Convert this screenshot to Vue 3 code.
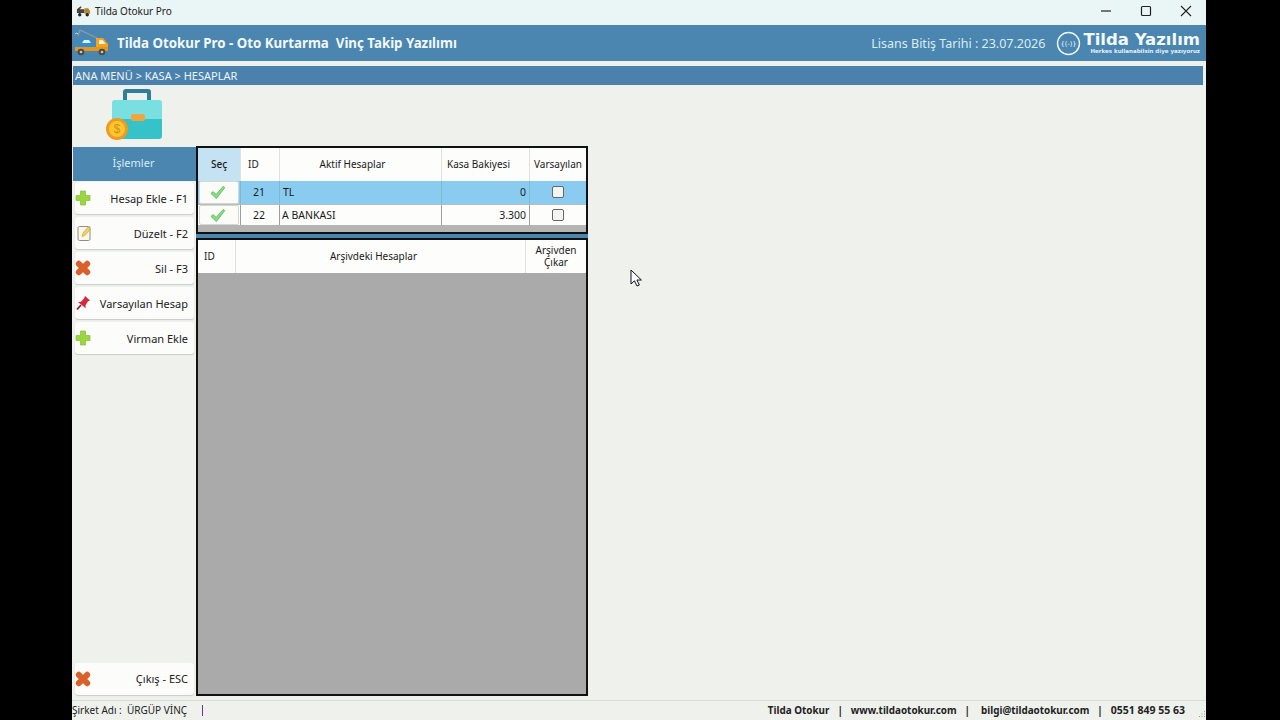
<template>
  <div class="window">
    <!-- Title bar -->
    <div class="titlebar">
      <svg class="app-icon" viewBox="0 0 16 12" width="15" height="12">
        <path d="M1 8V4l4-3 1 1-2 2h5v4z" fill="#4a4038" />
        <path d="M9 3h4l2 3v3H9z" fill="#b5842c" />
        <circle cx="4" cy="10" r="1.8" fill="#222" />
        <circle cx="12" cy="10" r="1.8" fill="#222" />
      </svg>
      <span class="app-name">Tilda Otokur Pro</span>
      <div class="win-controls">
        <svg viewBox="0 0 40 24" width="40" height="24"><path d="M15 11h10" stroke="#222" stroke-width="1.2" /></svg>
        <svg viewBox="0 0 40 24" width="40" height="24"><rect x="15.5" y="6.5" width="9" height="9" rx="1" fill="none" stroke="#222" stroke-width="1.2" /></svg>
        <svg viewBox="0 0 40 24" width="40" height="24"><path d="M15 6l10 10M25 6L15 16" stroke="#222" stroke-width="1.1" /></svg>
      </div>
    </div>

    <!-- Header -->
    <div class="header">
      <svg class="truck" viewBox="0 0 40 34" width="40" height="34">
        <path d="M25 12L8 4l-2 6" fill="none" stroke="#8d9aa3" stroke-width="1.3" />
        <path d="M3 8c1-1 2-1 3 0" fill="none" stroke="#dfe8ec" stroke-width="1" />
        <path d="M5 21v-3l3-1 3-4h7l3 4 2 1v3z" fill="#2f8fd0" />
        <path d="M10 17l2-3h5l2 3z" fill="#dff1fb" />
        <path d="M24 12h7l5 6v7H24z" fill="#f2a31f" />
        <path d="M27 14h3.500l3 4H27z" fill="#fff4d8" />
        <rect x="3" y="21" width="33" height="4" fill="#e8951a" />
        <circle cx="9" cy="26" r="3.300" fill="#4a4a48" />
        <circle cx="30" cy="26" r="3.300" fill="#4a4a48" />
        <circle cx="9" cy="26" r="1.300" fill="#c9c9c4" />
        <circle cx="30" cy="26" r="1.300" fill="#c9c9c4" />
      </svg>
      <span class="head-title">Tilda Otokur Pro - Oto Kurtarma&nbsp; Vinç Takip Yazılımı</span>
      <span class="license">Lisans Bitiş Tarihi : 23.07.2026</span>
      <div class="logo">
        <svg viewBox="0 0 26 26" width="25" height="25">
          <circle cx="13" cy="13" r="11.4" fill="none" stroke="#eef6fa" stroke-width="1.5" />
          <text x="13" y="15.500" class="logo-mark">{(-)}</text>
        </svg>
        <div class="logo-text">
          <div class="logo-name">Tilda Yazılım</div>
          <div class="logo-sub">Herkes kullanabilsin diye yazıyoruz</div>
        </div>
      </div>
    </div>

    <div class="breadcrumb">ANA MENÜ &gt; KASA &gt; HESAPLAR</div>

    <!-- Briefcase icon -->
    <div class="page-icon">
      <svg viewBox="0 0 58 53" width="58" height="53">
        <path d="M17 12V4a3 3 0 0 1 3-3h22a3 3 0 0 1 3 3v8h-4V5H21v7z" fill="#2f7f9a" />
        <path d="M6 15a3 3 0 0 1 3-3h44a3 3 0 0 1 3 3v16H6z" fill="#7adfe0" />
        <path d="M6 31h50v17a3 3 0 0 1-3 3H9a3 3 0 0 1-3-3z" fill="#35c3c9" />
        <rect x="25" y="26" width="14" height="7" rx="2" fill="#f0a63c" />
        <circle cx="11" cy="41" r="11" fill="#f09a1e" />
        <circle cx="11" cy="41" r="8" fill="#fbc72f" />
        <text x="11" y="45" class="coin">$</text>
      </svg>
    </div>

    <div class="content">
      <!-- Left menu -->
      <aside class="sidebar">
        <div class="side-head">İşlemler</div>
        <div class="side-btn" v-for="b in menu" :key="b.label">
          <svg class="btn-icon" viewBox="0 0 16 16" width="16" height="16"><use :href="'#' + b.icon" /></svg>
          <span>{{ b.label }}</span>
        </div>
        <div class="side-btn exit">
          <svg class="btn-icon" viewBox="0 0 16 16" width="16" height="16"><use href="#ic-x" /></svg>
          <span>Çıkış - ESC</span>
        </div>
      </aside>

      <!-- Account tables -->
      <div class="tables">
        <div class="grid-wrap active">
          <div class="row head active-cols">
            <div class="cell sel">Seç</div>
            <div class="cell left">ID</div>
            <div class="cell shift-16">Aktif Hesaplar</div>
            <div class="cell shift-14">Kasa Bakiyesi</div>
            <div class="cell">Varsayılan</div>
          </div>
          <div
            v-for="(a, i) in accounts"
            :key="a.id"
            class="row body-row active-cols"
            :class="{ selected: i === 0 }"
          >
            <div class="cell check-cell">
              <div class="check-btn">
                <svg viewBox="0 0 18 16" width="17" height="15"><path d="M2 9l2.500-2 3 3L15 1.500l1.800 1.200L7.800 14.500z" fill="#86dc7e" stroke="#4fb45a" stroke-width=".8" /></svg>
              </div>
            </div>
            <div class="cell id-cell">{{ a.id }}</div>
            <div class="cell name">{{ a.name }}</div>
            <div class="cell amount">{{ a.balance }}</div>
            <div class="cell"><span class="box"></span></div>
          </div>
        </div>

        <div class="splitter"></div>

        <div class="grid-wrap archive">
          <div class="row head archive-cols">
            <div class="cell left arch-id">ID</div>
            <div class="cell shift-14">Arşivdeki Hesaplar</div>
            <div class="cell two-line">Arşivden<br />Çıkar</div>
          </div>
          <div class="empty"></div>
        </div>
      </div>
    </div>

    <!-- Status bar -->
    <div class="statusbar">
      <span class="company">Şirket Adı :&nbsp; ÜRGÜP VİNÇ</span>
      <span class="caret"></span>
      <div class="contact">
        <span>Tilda Otokur</span><span>|</span>
        <span>www.tildaotokur.com</span><span>|</span>
        <span class="mail">bilgi@tildaotokur.com</span><span>|</span>
        <span class="phone">0551 849 55 63</span>
      </div>
      <svg class="grip" viewBox="0 0 8 8" width="8" height="8">
        <path d="M6 1h1v1H6zM3.500 3.500h1v1h-1zM6 3.500h1v1H6zM1 6h1v1H1zM3.500 6h1v1h-1zM6 6h1v1H6z" fill="#9aa0a0" />
      </svg>
    </div>

    <svg class="cursor" viewBox="0 0 12 18" width="12" height="18">
      <path d="M1 1v14l3.400-3.200L7 17l2.400-1-2.500-5h4.500z" fill="#fff" stroke="#111" stroke-width="1" />
    </svg>

    <!-- Shared button icons -->
    <svg width="0" height="0" class="defs">
      <defs>
        <g id="ic-plus">
          <path d="M5.500 1h5v4.500H15v5h-4.500V15h-5v-4.500H1v-5h4.500z" fill="#9ad63f" stroke="#84bf3a" stroke-width=".7" />
        </g>
        <g id="ic-note">
          <rect x="3" y="1.500" width="12" height="14" rx="1.500" fill="#fbf7e4" stroke="#8e8e86" />
          <path d="M7 11.500l1-3.500 5-6 2.500 2-5.500 6.500z" fill="#f2cf62" stroke="#b89538" stroke-width=".5" />
        </g>
        <g id="ic-x">
          <path d="M3.800 3.800l8.400 8.400M12.200 3.800l-8.400 8.400" fill="none" stroke="#d9602a" stroke-width="6" stroke-linecap="round" />
        </g>
        <g id="ic-pin">
          <path d="M10 1l5 4.500-2 .8-2.500 4 .2 3L3 7l3-.3 3-3.200z" fill="#d7263d" />
          <path d="M6 10l-4 4.500" stroke="#8a2030" stroke-width="1.800" />
        </g>
      </defs>
    </svg>
  </div>
</template>

<script setup>
const menu = [
  { label: "Hesap Ekle - F1", icon: "ic-plus" },
  { label: "Düzelt - F2", icon: "ic-note" },
  { label: "Sil - F3", icon: "ic-x" },
  { label: "Varsayılan Hesap", icon: "ic-pin" },
  { label: "Virman Ekle", icon: "ic-plus" },
];

const accounts = [
  { id: 21, name: "TL", balance: "0" },
  { id: 22, name: "A BANKASI", balance: "3.300" },
];
</script>

<style>
html,
body {
  background: #000;
}
</style>

<style scoped>
.window {
  position: relative;
  width: 1134px;
  height: 720px;
  margin-left: 72px;
  background: #eef1ec;
  display: flex;
  flex-direction: column;
  font-family: "Noto Sans", "Liberation Sans", sans-serif;
  font-size: 11px;
  color: #1a1a1a;
  overflow: hidden;
}

.titlebar {
  height: 24px;
  flex: none;
  background: #eaf5f5;
  display: flex;
  align-items: center;
  padding-left: 4px;
}
.app-icon {
  margin-top: -2px;
}
.app-name {
  margin-left: 4px;
  margin-top: -2px;
  font-size: 10px;
  color: #222;
}
.win-controls {
  margin-left: auto;
  display: flex;
}
.win-controls svg {
  display: block;
}

.header {
  height: 36px;
  flex: none;
  margin-top: 1px;
  background: #4a86b0;
  display: flex;
  align-items: center;
  color: #f2f8fb;
}
.head-title {
  margin-left: 5px;
  font-size: 13.3px;
  font-weight: 700;
}
.license {
  margin-left: auto;
  font-size: 12.5px;
  color: #dcecf4;
}
.logo {
  margin-left: 11px;
  margin-right: 6px;
  display: flex;
  align-items: center;
  gap: 2px;
}
.logo svg {
  display: block;
}
.logo-mark {
  font-family: "DejaVu Sans", sans-serif;
  font-size: 7px;
  text-anchor: middle;
  fill: #eef6fa;
}
.logo-text {
  line-height: 1;
}
.logo-name {
  font-family: "DejaVu Sans", sans-serif;
  font-size: 16.500px;
  font-weight: 700;
  line-height: 17px;
  color: #f4f9fb;
}
.logo-sub {
  font-family: "DejaVu Sans", sans-serif;
  font-size: 5.500px;
  font-weight: 700;
  line-height: 7px;
  text-align: right;
  color: #e4f0f6;
}

.breadcrumb {
  height: 19px;
  flex: none;
  margin: 5px 3px 0 1px;
  padding-left: 2px;
  background: #4a82ad;
  color: #eef5f9;
  font-size: 11px;
  line-height: 20px;
}

.page-icon {
  height: 61px;
  box-sizing: border-box;
  flex: none;
  padding: 3px 0 0 34px;
}
.page-icon svg {
  display: block;
}
.coin {
  font-family: "Liberation Sans", sans-serif;
  font-size: 12px;
  text-anchor: middle;
  fill: #e08a1a;
}

.content {
  flex: 1;
  min-height: 0;
  display: flex;
}

.sidebar {
  width: 124px;
  flex: none;
  display: flex;
  flex-direction: column;
  align-items: flex-end;
  padding-bottom: 5px;
}
.side-head {
  width: 123px;
  height: 34px;
  box-sizing: border-box;
  padding-right: 2px;
  margin: 1px 0 1px;
  background: #4a86b0;
  color: #d8ecf6;
  text-align: center;
  line-height: 32px;
}
.side-btn {
  position: relative;
  width: 119px;
  height: 32px;
  margin: 0 2px 3px 0;
  box-sizing: border-box;
  background: #fcfcfa;
  border-radius: 3px;
  box-shadow: 0 1px 1px #c9ccc8;
  display: flex;
  align-items: center;
  justify-content: flex-end;
  padding-right: 6px;
  color: #222;
}
.btn-icon {
  position: absolute;
  left: 0;
  top: 8px;
}
.exit {
  margin-top: auto;
  margin-bottom: 0;
  padding-bottom: 1px;
}

.tables {
  width: 392px;
  flex: none;
  display: flex;
  flex-direction: column;
  padding-bottom: 4px;
}
.grid-wrap {
  box-sizing: border-box;
  border: 2px solid #111;
}
.active {
  height: 88px;
  flex: none;
  background: #b4b4b2;
}
.archive {
  flex: 1;
  background: #aaa;
  display: flex;
  flex-direction: column;
}
.splitter {
  height: 4px;
  flex: none;
  background: #4a86b0;
}
.row {
  display: grid;
  background: #fdfdfb;
}
.active-cols {
  grid-template-columns: 43px 39px 162px 88px 1fr;
}
.archive-cols {
  grid-template-columns: 38px 290px 1fr;
}
.head {
  height: 33px;
}
.cell {
  display: flex;
  align-items: center;
  justify-content: center;
  text-align: center;
  box-sizing: border-box;
  border-right: 1px solid #e0e2de;
  font-size: 10px;
}
.head .cell {
  padding-bottom: 2px;
}
.cell:last-child {
  border-right: none;
}
.sel {
  background: #c5e2f2;
  font-weight: 500;
}
.left {
  justify-content: flex-start;
  padding-left: 7px;
}
.arch-id {
  padding-left: 6px;
}
.shift-16 {
  padding-right: 16px;
}
.shift-14 {
  padding-right: 14px;
}
.two-line {
  line-height: 12px;
}
.body-row {
  height: 21px;
  border-top: 1px solid #b8bcb8;
  box-sizing: border-box;
}
.body-row .cell {
  border-right-color: #9aa0a0;
  font-size: 10.5px;
  padding-bottom: 1px;
}
.selected {
  background: #8accf0;
  height: 23px;
  border-top: none;
}
.selected .cell {
  border-right-color: #7fb8d4;
}
.id-cell {
  padding-right: 2px;
}
.name {
  justify-content: flex-start;
  padding-left: 2px;
}
.selected .name {
  padding-left: 3px;
}
.amount {
  justify-content: flex-end;
  padding-right: 3px;
}
.body-row .check-cell {
  padding: 0 1px;
  align-items: stretch;
}
.check-btn {
  flex: 1;
  box-sizing: border-box;
  padding-right: 3px;
  background: #fbfbf8;
  border: 1px solid #d4d6d2;
  border-radius: 2px;
  display: flex;
  align-items: center;
  justify-content: center;
}
.box {
  width: 10px;
  height: 10px;
  border: 1px solid #666;
  border-radius: 2px;
  background: #f4f4f2;
}
.empty {
  flex: 1;
  background: #aaa;
}

.statusbar {
  height: 20px;
  flex: none;
  box-sizing: border-box;
  border-top: 1px solid #d8dcd8;
  display: flex;
  align-items: center;
  color: #222;
  font-size: 10px;
}
.company {
  margin-top: -2px;
}
.caret {
  width: 1px;
  height: 11px;
  margin-left: 15px;
  margin-top: -1px;
  background: #7a2f8c;
}
.contact {
  margin-left: auto;
  margin-right: 13px;
  margin-top: -2px;
  display: flex;
  gap: 8px;
  font-size: 9.900px;
  font-weight: 700;
}
.mail {
  margin-left: 3px;
}
.phone {
  font-size: 10.500px;
}
.grip {
  margin-top: 6px;
}

.cursor {
  position: absolute;
  left: 558px;
  top: 269px;
}
.defs {
  position: absolute;
}
</style>
